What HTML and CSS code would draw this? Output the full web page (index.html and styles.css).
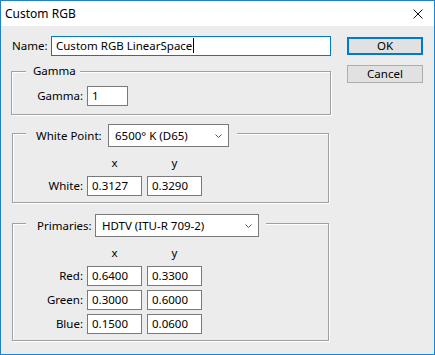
FILE: index.html
```html
<!DOCTYPE html>
<html lang="en">
<head>
  <meta charset="UTF-8" />
  <title>Custom RGB</title>
  <link rel="stylesheet" href="styles.css">
</head>
<body>
  <div class="window">
    <div class="titlebar">
      <span class="title">Custom RGB</span>
      <svg class="close" width="10" height="10" viewBox="0 0 10 10">
        <path d="M0.5 0.5 L9.5 9.5 M9.5 0.5 L0.5 9.5" stroke="#111" stroke-width="1" fill="none" />
      </svg>
    </div>

    <div class="content">
      <div class="main">
        <div class="name-row">
          <span class="name-label">Name:</span>
          <div class="field name-field">Custom RGB LinearSpace<span class="caret"></span></div>
        </div>

        <fieldset class="group group-gamma">
          <legend>Gamma</legend>
          <div class="row">
            <span class="label">Gamma:</span>
            <div class="field gamma-field">1</div>
          </div>
        </fieldset>

        <fieldset class="group group-white">
          <legend>
            <div class="legend-inner">
              <span class="legend-label">White Point:</span>
              <div class="select select-white">
                <span>6500° K (D65)</span>
                <svg width="7" height="4" viewBox="0 0 7 4"><polyline points="0.5,0.5 3.5,3.5 6.5,0.5" stroke="#555" fill="none" /></svg>
              </div>
            </div>
          </legend>
          <div class="row heads">
            <span class="label"></span>
            <span class="col-head">x</span>
            <span class="col-head">y</span>
          </div>
          <div class="row">
            <span class="label">White:</span>
            <div class="field num">0.3127</div>
            <div class="field num">0.3290</div>
          </div>
        </fieldset>

        <fieldset class="group group-primaries">
          <legend>
            <div class="legend-inner">
              <span class="legend-label">Primaries:</span>
              <div class="select select-primaries">
                <span>HDTV (ITU-R 709-2)</span>
                <svg width="7" height="4" viewBox="0 0 7 4"><polyline points="0.5,0.5 3.5,3.5 6.5,0.5" stroke="#555" fill="none" /></svg>
              </div>
            </div>
          </legend>
          <div class="row heads">
            <span class="label"></span>
            <span class="col-head">x</span>
            <span class="col-head">y</span>
          </div>
          <div class="row">
            <span class="label">Red:</span>
            <div class="field num">0.6400</div>
            <div class="field num">0.3300</div>
          </div>
          <div class="row">
            <span class="label">Green:</span>
            <div class="field num">0.3000</div>
            <div class="field num">0.6000</div>
          </div>
          <div class="row">
            <span class="label">Blue:</span>
            <div class="field num">0.1500</div>
            <div class="field num">0.0600</div>
          </div>
        </fieldset>
      </div>

      <div class="buttons">
        <button class="btn btn-default">OK</button>
        <button class="btn">Cancel</button>
      </div>
    </div>
  </div>
</body>
</html>
```

FILE: styles.css
```css
* {
  box-sizing: border-box;
}

body {
  margin: 0;
  background: #ffffff;
  color: #000000;
  font-family: "Noto Sans", "Open Sans", sans-serif;
  font-size: 11.5px;
  line-height: 16px;
}

.window {
  width: 435px;
  height: 355px;
  border: 1px solid #1883d7;
  background: #ececec;
  display: flex;
  flex-direction: column;
}

.titlebar {
  height: 25px;
  flex-shrink: 0;
  background: #ffffff;
  display: flex;
  align-items: center;
  justify-content: space-between;
  padding: 0 11px 0 4px;
}

.title {
  font-size: 12px;
}

.content {
  display: flex;
  padding: 10px 11px 0 10px;
}

.main {
  width: 320px;
}

/* name row */
.name-row {
  display: flex;
  align-items: center;
  height: 20px;
  padding-left: 1px;
}

.name-label {
  width: 39px;
}

.field {
  height: 20px;
  border: 1px solid #7a7a7a;
  background: #ffffff;
  padding: 0 4px;
  line-height: 18px;
  white-space: nowrap;
}

.name-field {
  width: 280px;
  border-color: #0078d7;
}

.caret {
  display: inline-block;
  width: 1px;
  height: 15px;
  margin-left: 1px;
  background: #000000;
  vertical-align: -3px;
}

/* group boxes */
.group {
  margin: 0;
  padding: 0;
  min-width: 0;
  border: 1px solid #a0a0a0;
  box-shadow: 1px 1px 0 #ffffff, inset 1px 1px 0 #ffffff;
}

.group legend {
  background: #ececec;
}

.group-gamma {
  width: 320px;
  margin-top: 7px;
  padding: 7px 0 8px 0;
}

.group-gamma legend {
  margin-left: 14px;
  padding: 0 4px 0 7px;
}

.group-white,
.group-primaries {
  width: 317px;
  margin-left: 1px;
  padding: 8px 0 6px 0;
}

.group-white {
  margin-top: 4px;
}

.group-primaries {
  margin-top: 6px;
}

.group-white legend,
.group-primaries legend {
  margin-left: 13px;
  padding-top: 5px;
}

.group-white legend {
  padding-left: 10px;
  padding-right: 8px;
}

.group-primaries legend {
  padding-left: 11px;
  padding-right: 7px;
}

.legend-inner {
  display: flex;
  align-items: center;
  gap: 5px;
}

.legend-label {
  white-space: nowrap;
}

.group-white .legend-label {
  width: 67px;
}

.group-primaries .legend-label {
  width: 53px;
  text-align: right;
}

.select {
  height: 23px;
  border: 1px solid #7a7a7a;
  background: #ffffff;
  display: flex;
  align-items: center;
  justify-content: space-between;
  padding: 0 6px 0 6px;
}

.select-white {
  width: 121px;
}

.select-primaries {
  width: 164px;
}

/* rows */
.row {
  display: flex;
  align-items: center;
}

.row + .row {
  margin-top: 4px;
}

.row.heads + .row {
  margin-top: 5px;
}

.label {
  width: 70px;
  margin-right: 4px;
  text-align: right;
}

.group-gamma .label {
  width: 71px;
}

.gamma-field {
  width: 41px;
}

.num,
.col-head {
  width: 55px;
}

.num + .num,
.col-head + .col-head {
  margin-left: 5px;
}

.col-head {
  text-align: center;
}

/* buttons */
.buttons {
  margin-left: auto;
  display: flex;
  flex-direction: column;
}

.btn {
  width: 76px;
  height: 18px;
  padding: 0;
  font: inherit;
  line-height: 14px;
  color: #000000;
  background: #e1e1e1;
  border: 1px solid #adadad;
}

.btn-default {
  margin-top: 1px;
  border: 2px solid #0078d7;
}

.btn + .btn {
  margin-top: 10px;
}
```
